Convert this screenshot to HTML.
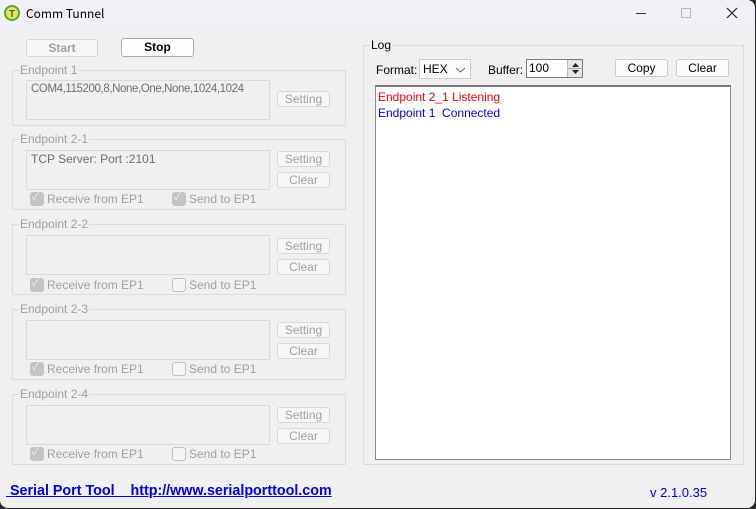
<!DOCTYPE html>
<html><head><style>
*{margin:0;padding:0;box-sizing:border-box}
body{width:756px;height:509px;background:#2b2b2b;font-family:"Liberation Sans","Noto Sans CJK JP",sans-serif;overflow:hidden;position:relative}
.win{position:absolute;left:0;top:0;width:755px;height:508px;background:#f0f0f0;border-radius:0 8px 8px 8px;overflow:hidden}
.title{position:absolute;left:0;top:0;width:100%;height:28px;background:#f3eff6}
.a{position:absolute}
.btn{position:absolute;border:1px solid #d8d8d8;border-radius:3px;background:#f6f6f6;font-size:12px;color:#a0a0a0;text-align:center;line-height:14px}
.grp{position:absolute;border:1px solid #dcdcdc}
.gl{position:absolute;background:#f0f0f0;font-size:12px;color:#a0a0a0;padding:0 1px;line-height:14px}
.tb{position:absolute;border:1px solid #dadada;background:#f0f0f0;font-size:12px;color:#6d6d6d;padding:1px 4px;line-height:14px}
.cb{position:absolute;font-size:12px;color:#a0a0a0;line-height:14px;padding-left:17px}
.cb:before{content:"";position:absolute;left:0;top:0;width:12px;height:12px;border:1px solid #c0c0c0;border-radius:3px;background:#f5f5f5}
.cb.on:before{background:#c4c4c4;border-color:#c4c4c4}
.cb.on:after{content:"✓";position:absolute;left:2px;top:-1px;color:#f0f0f0;font-size:10px}
.t{font-size:12px;line-height:14px;color:#000}
</style></head><body>
<div class="win">
<div class="title"></div>
<svg class="a" style="left:4px;top:5px" width="16" height="16"><circle cx="8" cy="8" r="7" fill="#f0e060" stroke="#4caf32" stroke-width="2"/><text x="8" y="12" font-size="10" text-anchor="middle" fill="#2a7a20" font-family="Liberation Sans" font-weight="bold">T</text></svg>
<div class="a t" style="left:26px;top:7px;font-family:'Noto Sans CJK JP',sans-serif">Comm Tunnel</div>
<div class="a" style="left:636px;top:13px;width:10px;height:1px;background:#333"></div>
<div class="a" style="left:681px;top:8px;width:10px;height:10px;border:1px solid #b8b8b8"></div>
<svg class="a" style="left:726px;top:7px" width="12" height="12"><path d="M1 1L11 11M11 1L1 11" stroke="#222" stroke-width="1.2"/></svg>

<div class="btn" style="left:26px;top:39px;width:72px;height:18px;font-weight:bold;line-height:16px">Start</div>
<div class="btn" style="left:121px;top:38px;width:73px;height:19px;color:#000;background:#fdfdfd;border-color:#aaa;font-weight:bold;line-height:17px">Stop</div>

<div class="grp" style="left:12px;top:70px;width:334px;height:56px"></div>
<div class="gl" style="left:19px;top:63px">Endpoint 1</div>
<div class="tb" style="left:26px;top:80px;width:244px;height:40px;font-size:11.5px;letter-spacing:-0.4px">COM4,115200,8,None,One,None,1024,1024</div>
<div class="btn" style="left:277px;top:91px;width:53px;height:16px">Setting</div>

<div class="grp" style="left:12px;top:139px;width:334px;height:71px"></div>
<div class="gl" style="left:19px;top:132px">Endpoint 2-1</div>
<div class="tb" style="left:26px;top:150px;width:244px;height:40px">TCP Server: Port :2101</div>
<div class="btn" style="left:277px;top:151px;width:53px;height:16px">Setting</div>
<div class="btn" style="left:277px;top:172px;width:53px;height:16px">Clear</div>
<div class="cb on" style="left:30px;top:192px">Receive from EP1</div>
<div class="cb on" style="left:172px;top:192px">Send to EP1</div>

<div class="grp" style="left:12px;top:224px;width:334px;height:71px"></div>
<div class="gl" style="left:19px;top:217px">Endpoint 2-2</div>
<div class="tb" style="left:26px;top:235px;width:244px;height:40px"></div>
<div class="btn" style="left:277px;top:238px;width:53px;height:16px">Setting</div>
<div class="btn" style="left:277px;top:259px;width:53px;height:16px">Clear</div>
<div class="cb on" style="left:30px;top:278px">Receive from EP1</div>
<div class="cb" style="left:172px;top:278px">Send to EP1</div>

<div class="grp" style="left:12px;top:309px;width:334px;height:71px"></div>
<div class="gl" style="left:19px;top:302px">Endpoint 2-3</div>
<div class="tb" style="left:26px;top:320px;width:244px;height:40px"></div>
<div class="btn" style="left:277px;top:322px;width:53px;height:16px">Setting</div>
<div class="btn" style="left:277px;top:343px;width:53px;height:16px">Clear</div>
<div class="cb on" style="left:30px;top:362px">Receive from EP1</div>
<div class="cb" style="left:172px;top:362px">Send to EP1</div>

<div class="grp" style="left:12px;top:394px;width:334px;height:71px"></div>
<div class="gl" style="left:19px;top:387px">Endpoint 2-4</div>
<div class="tb" style="left:26px;top:405px;width:244px;height:40px"></div>
<div class="btn" style="left:277px;top:407px;width:53px;height:16px">Setting</div>
<div class="btn" style="left:277px;top:428px;width:53px;height:16px">Clear</div>
<div class="cb on" style="left:30px;top:447px">Receive from EP1</div>
<div class="cb" style="left:172px;top:447px">Send to EP1</div>

<div class="grp" style="left:363px;top:45px;width:381px;height:420px"></div>
<div class="gl" style="left:370px;top:38px;color:#000">Log</div>
<div class="a t" style="left:376px;top:63px">Format:</div>
<div class="a" style="left:419px;top:59px;width:52px;height:20px;border:1px solid #ccc;background:#fbfbfb"><span class="t" style="position:absolute;left:3px;top:2px">HEX</span><svg style="position:absolute;left:36px;top:7px" width="9" height="6"><path d="M0 1L4.5 5L9 1" fill="none" stroke="#666"/></svg></div>
<div class="a t" style="left:488px;top:63px">Buffer:</div>
<div class="a" style="left:526px;top:59px;width:57px;height:19px;border:1px solid #7a7a7a;background:#fff"><span class="t" style="position:absolute;left:2px;top:1px">100</span><div style="position:absolute;left:40px;top:0;width:15px;height:17px;background:#e6e6e6;border-left:1px solid #bbb"><svg width="15" height="17"><path d="M4 7L7.5 3L11 7Z M4 10L7.5 14L11 10Z" fill="#222"/><line x1="0" y1="8.5" x2="15" y2="8.5" stroke="#aaa"/></svg></div></div>
<div class="btn" style="left:615px;top:59px;width:53px;height:18px;color:#000;background:#fbfbfb;border-color:#ccc;line-height:16px">Copy</div>
<div class="btn" style="left:676px;top:59px;width:53px;height:18px;color:#000;background:#fbfbfb;border-color:#ccc;line-height:16px">Clear</div>
<div class="a" style="left:375px;top:85px;width:356px;height:375px;background:#fff;border:1px solid #888;border-top:2px solid #777">
<div class="t" style="position:absolute;left:2px;top:3px;color:#f00">Endpoint 2_1 Listening</div>
<div class="t" style="position:absolute;left:2px;top:19px;color:#00f">Endpoint 1&nbsp; Connected</div>
</div>

<div class="a" style="left:6px;top:483px;font-size:14.3px;font-weight:bold;color:#0000ee;text-decoration:underline;white-space:pre">&nbsp;Serial Port Tool    http://www.serialporttool.com</div>
<div class="a" style="left:650px;top:485px;font-size:13px;color:#0000ee">v 2.1.0.35</div>
</div>
</body></html>
